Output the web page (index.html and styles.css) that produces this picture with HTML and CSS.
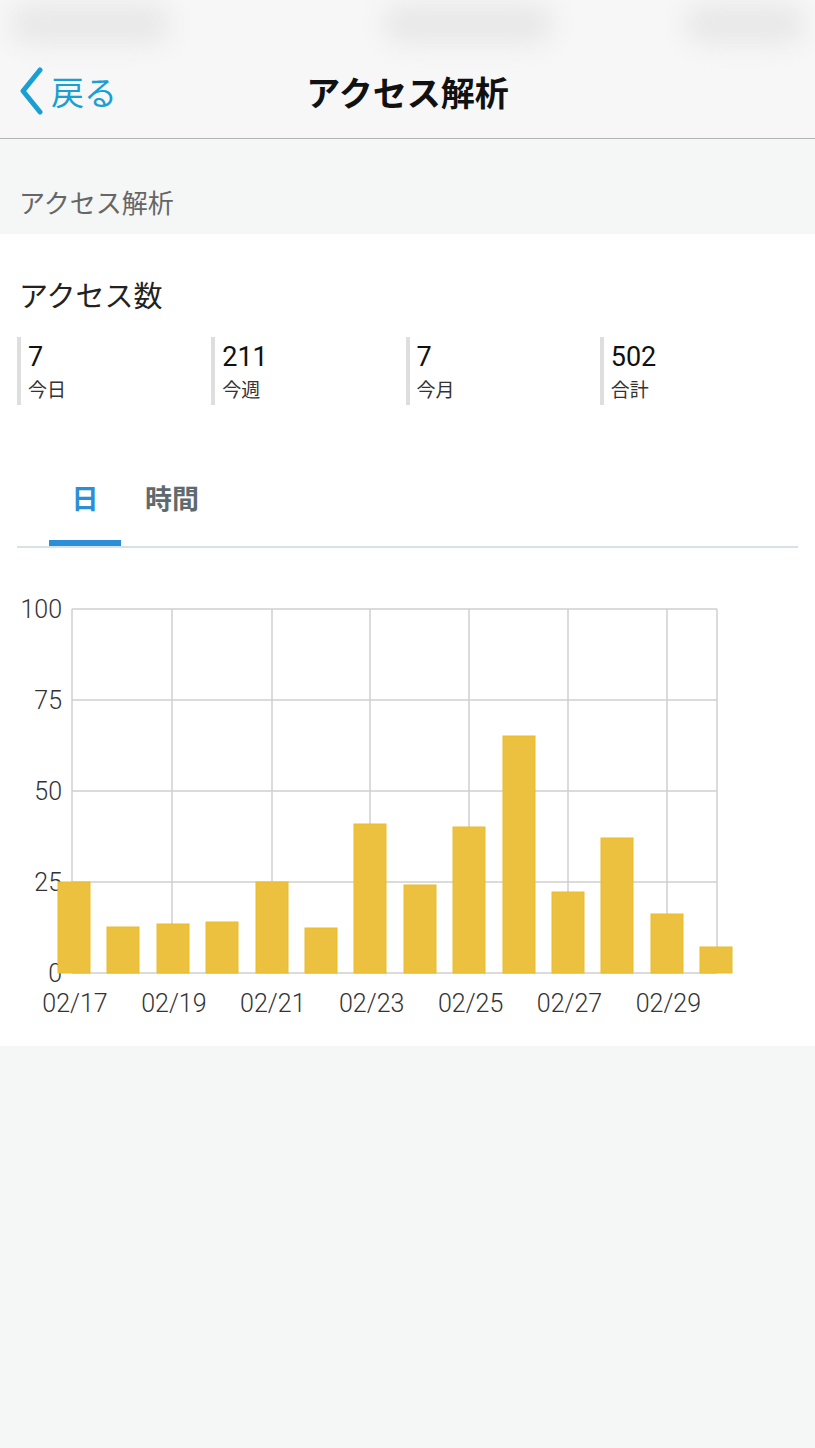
FILE: index.html
```html
<!DOCTYPE html>
<html lang="ja">
<head>
  <meta charset="UTF-8">
  <title>アクセス解析</title>
  <link rel="stylesheet" href="styles.css">
</head>
<body>

  <div class="navbar">
    <div class="statusbar">
      <span class="blob blob-left"></span>
      <span class="blob blob-mid"></span>
      <span class="blob blob-right"></span>
    </div>
    <div class="nav-row">
      <a class="back" href="#">
        <svg class="chevron" width="28" height="48" viewBox="0 0 28 48">
          <path d="M23 3 L6 24 L23 45" fill="none" stroke="#1a9fd2" stroke-width="5" stroke-linecap="round" stroke-linejoin="round"/>
        </svg>
        <span>戻る</span>
      </a>
      <h1 class="nav-title">アクセス解析</h1>
    </div>
  </div>

  <div class="section-head">アクセス解析</div>

  <div class="card">
    <h2 class="card-title">アクセス数</h2>

    <div class="stats">
      <div class="stat"><div class="stat-num">7</div><div class="stat-label">今日</div></div>
      <div class="stat"><div class="stat-num">211</div><div class="stat-label">今週</div></div>
      <div class="stat"><div class="stat-num">7</div><div class="stat-label">今月</div></div>
      <div class="stat"><div class="stat-num">502</div><div class="stat-label">合計</div></div>
    </div>

    <div class="tabs">
      <div class="tab active">日</div>
      <div class="tab">時間</div>
    </div>

    <svg class="chart" id="chart" width="815" height="440" viewBox="0 590 815 440"></svg>
  </div>

  <script>
    const chart = document.getElementById('chart');
    const NS = 'http://www.w3.org/2000/svg';
    const gridLeft = 72, gridRight = 717, gridTop = 609, gridBottom = 973;
    const barTops = [882, 927, 924, 922, 882, 928, 824, 885, 827, 736, 892, 838, 914, 947];
    const labels = ['02/17', '02/19', '02/21', '02/23', '02/25', '02/27', '02/29'];

    function el(name, attrs, text) {
      const e = document.createElementNS(NS, name);
      for (const k in attrs) e.setAttribute(k, attrs[k]);
      if (text) e.textContent = text;
      chart.appendChild(e);
      return e;
    }

    // horizontal grid + y labels
    [100, 75, 50, 25, 0].forEach((v, i) => {
      const y = gridTop + i * 91;
      el('line', { x1: gridLeft, x2: gridRight, y1: y, y2: y, class: 'grid' });
      el('text', { x: 62, y: y + 9, class: 'ylabel' }, String(v));
    });

    // vertical grid every two days
    [72, 172, 272, 370, 469, 568, 667, gridRight].forEach(x => {
      el('line', { x1: x, x2: x, y1: gridTop, y2: gridBottom, class: 'grid' });
    });

    // bars
    barTops.forEach((t, i) => {
      const x = Math.round(58 + i * 49.4);
      el('rect', { x: x, y: t, width: 32, height: gridBottom - t, class: 'bar' });
    });

    // x labels
    labels.forEach((l, i) => {
      el('text', { x: 75 + i * 98.9, y: 1012, class: 'xlabel' }, l);
    });
  </script>

</body>
</html>
```

FILE: styles.css
```css
body {
  margin: 0;
  padding: 0;
  background-color: #f5f6f6;
  font-family: "Noto Sans CJK JP", sans-serif;
  color: #222;
}
.navbar {
  background-color: #f7f7f7;
  border-bottom: 1px solid #b4b4b4;
  height: 138px;
  overflow: hidden;
}
.statusbar {
  height: 44px;
  display: flex;
  justify-content: space-between;
  padding: 4px 10px 0;
}
.blob {
  display: block;
  height: 40px;
  background-color: #e8e8e8;
  border-radius: 20px;
  filter: blur(12px);
}
.blob-left {
  width: 160px;
}
.blob-mid {
  width: 170px;
  margin-left: 80px;
}
.blob-right {
  width: 120px;
}
.nav-row {
  display: flex;
  align-items: center;
  height: 86px;
  position: relative;
}
.back {
  display: flex;
  align-items: center;
  gap: 6px;
  padding-left: 17px;
  color: #1a9fd2;
  text-decoration: none;
  font-size: 33px;
  z-index: 1;
}
.nav-title {
  position: absolute;
  left: 0;
  right: 0;
  margin: 0;
  text-align: center;
  font-size: 34px;
  font-weight: bold;
  color: #111;
}
.section-head {
  height: 95px;
  padding: 30px 19px 0;
  display: flex;
  align-items: center;
  box-sizing: border-box;
  font-size: 26px;
  color: #666;
}
.card {
  background-color: #fff;
  padding: 35px 21px 26px 17px;
  height: 812px;
  box-sizing: border-box;
}
.card-title {
  margin: 0 0 0 2px;
  font-size: 29px;
  font-weight: normal;
  line-height: 50px;
  color: #222;
}
.stats {
  display: grid;
  grid-template-columns: repeat(4, 1fr);
  margin-top: 18px;
}
.stat {
  border-left: 4px solid #dedede;
  padding-left: 7px;
  height: 68px;
}
.stat-num {
  font-family: Roboto, sans-serif;
  font-size: 27px;
  line-height: 40px;
  color: #111;
}
.stat-label {
  font-size: 19px;
  line-height: 24px;
  color: #333;
}
.tabs {
  display: flex;
  margin-top: 60px;
  margin-right: -4px;
  padding-left: 32px;
  border-bottom: 2px solid #d6e2e5;
}
.tab {
  font-size: 27px;
  font-weight: bold;
  color: #5f6a6e;
  height: 81px;
  line-height: 66px;
  box-sizing: border-box;
  padding: 0 0 0 24px;
}
.tab.active {
  color: #2a8ed9;
  width: 72px;
  padding: 0;
  text-align: center;
  border-bottom: 6px solid #2a8ed9;
  margin-bottom: -1px;
}
.chart {
  display: block;
  margin: 42px 0 0 -17px;
}
.grid {
  stroke: #cfcfcf;
  stroke-width: 1.5;
}
.bar {
  fill: #ecc13f;
  stroke: #eabb2a;
  stroke-width: 1;
}
.ylabel {
  font-family: Roboto, sans-serif;
  font-weight: 300;
  font-size: 25px;
  fill: #333;
  text-anchor: end;
}
.xlabel {
  font-family: Roboto, sans-serif;
  font-weight: 300;
  font-size: 25px;
  fill: #333;
  text-anchor: middle;
}
```
